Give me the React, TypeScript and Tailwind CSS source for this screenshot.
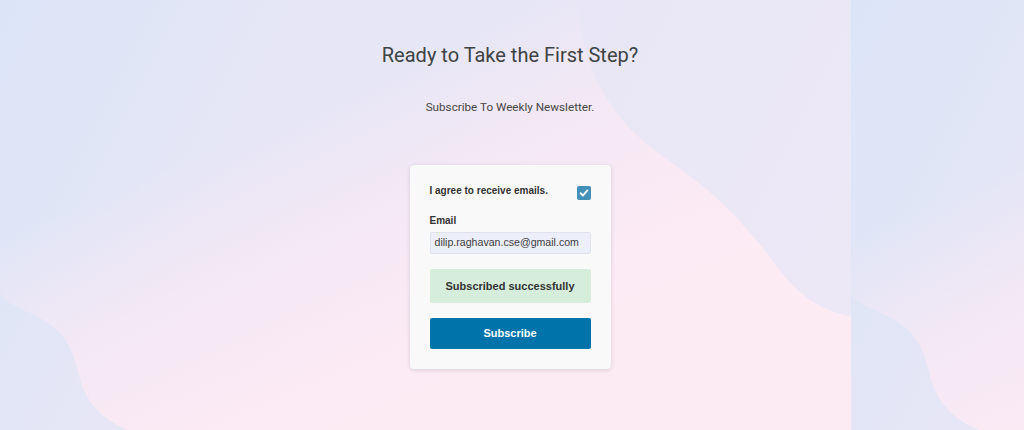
import React from 'react';

// Tiled decorative background (the page repeats an 851px wide image)
function BgTile({ id }: { id: string }) {
  return (
    <svg width="851" height="430" viewBox="0 0 851 430" className="shrink-0 block">
      <defs>
        <linearGradient id={`base-${id}`} x1="0" y1="0" x2="851" y2="430" gradientUnits="userSpaceOnUse">
          <stop offset="0" stopColor="#dbe5f7" />
          <stop offset="0.3" stopColor="#e6e6f6" />
          <stop offset="1" stopColor="#ede8f6" />
        </linearGradient>
        <linearGradient id={`pink-${id}`} x1="300" y1="110" x2="420" y2="390" gradientUnits="userSpaceOnUse">
          <stop offset="0" stopColor="#fbe9f4" stopOpacity="0" />
          <stop offset="0.45" stopColor="#fbe9f4" stopOpacity="0.7" />
          <stop offset="1" stopColor="#fdebf4" stopOpacity="1" />
        </linearGradient>
      </defs>
      <rect width="851" height="430" fill={`url(#base-${id})`} />
      <path
        d="M 577 0 C 582 70, 610 120, 665 158 C 720 195, 750 230, 778 268 C 800 298, 825 312, 851 316 L 851 430 L 128 430 C 98 418, 84 398, 78 372 C 72 345, 62 330, 40 318 C 22 308, 0 302, 0 290 L 0 0 Z"
        fill={`url(#pink-${id})`}
      />
    </svg>
  );
}

function Check() {
  return (
    <svg width="10" height="10" viewBox="0 0 10 10" fill="none">
      <path d="M1.6 5.2 L4 7.5 L8.4 2.4" stroke="#ffffff" strokeWidth="1.9" strokeLinecap="round" strokeLinejoin="round" />
    </svg>
  );
}

export default function App() {
  return (
    <div className="relative w-full h-[430px] overflow-hidden">
      <div className="absolute inset-0 flex">
        <BgTile id="a" />
        <BgTile id="b" />
      </div>

      <div className="relative flex flex-col items-center pr-1 pt-[43px]">
        <h2 className="text-[20px] leading-[24px] text-[#3e4345] font-['Roboto',sans-serif] font-normal">
          Ready to Take the First Step?
        </h2>
        <p className="mt-8 text-[11.7px] leading-4 text-[#474747] font-['Roboto',sans-serif]">
          Subscribe To Weekly Newsletter.
        </p>

        <div className="mt-[50px] w-[201px] bg-[#f9f9f9] rounded-[4px] shadow-[0_1px_4px_rgba(0,0,0,0.14)] px-5 pt-5 pb-5 font-['Liberation_Sans',Arial,sans-serif] text-[#333333]">
          <div className="flex justify-between items-start">
            <span className="text-[10px] leading-3 font-bold">I agree to receive emails.</span>
            <span className="mt-px w-[14px] h-[14px] rounded-[2px] bg-[#4390b8] flex items-center justify-center">
              <Check />
            </span>
          </div>

          <div className="mt-[15px] text-[10px] leading-3 font-bold">Email</div>
          <div className="mt-[5px] h-[22px] bg-[#eceef9] border border-[#dfe1ee] rounded-[2px] pl-1 flex items-center text-[10.6px] text-[#3d3d3d]">
            dilip.raghavan.cse@gmail.com
          </div>

          <div className="mt-[15px] h-[34px] bg-[#d5edda] rounded-[2px] flex items-center justify-center text-[11px] font-bold text-[#333333]">
            Subscribed successfully
          </div>

          <button className="mt-[15px] w-full h-[31px] bg-[#0073aa] rounded-[2px] text-white text-[11px] font-bold">
            Subscribe
          </button>
        </div>
      </div>
    </div>
  );
}
